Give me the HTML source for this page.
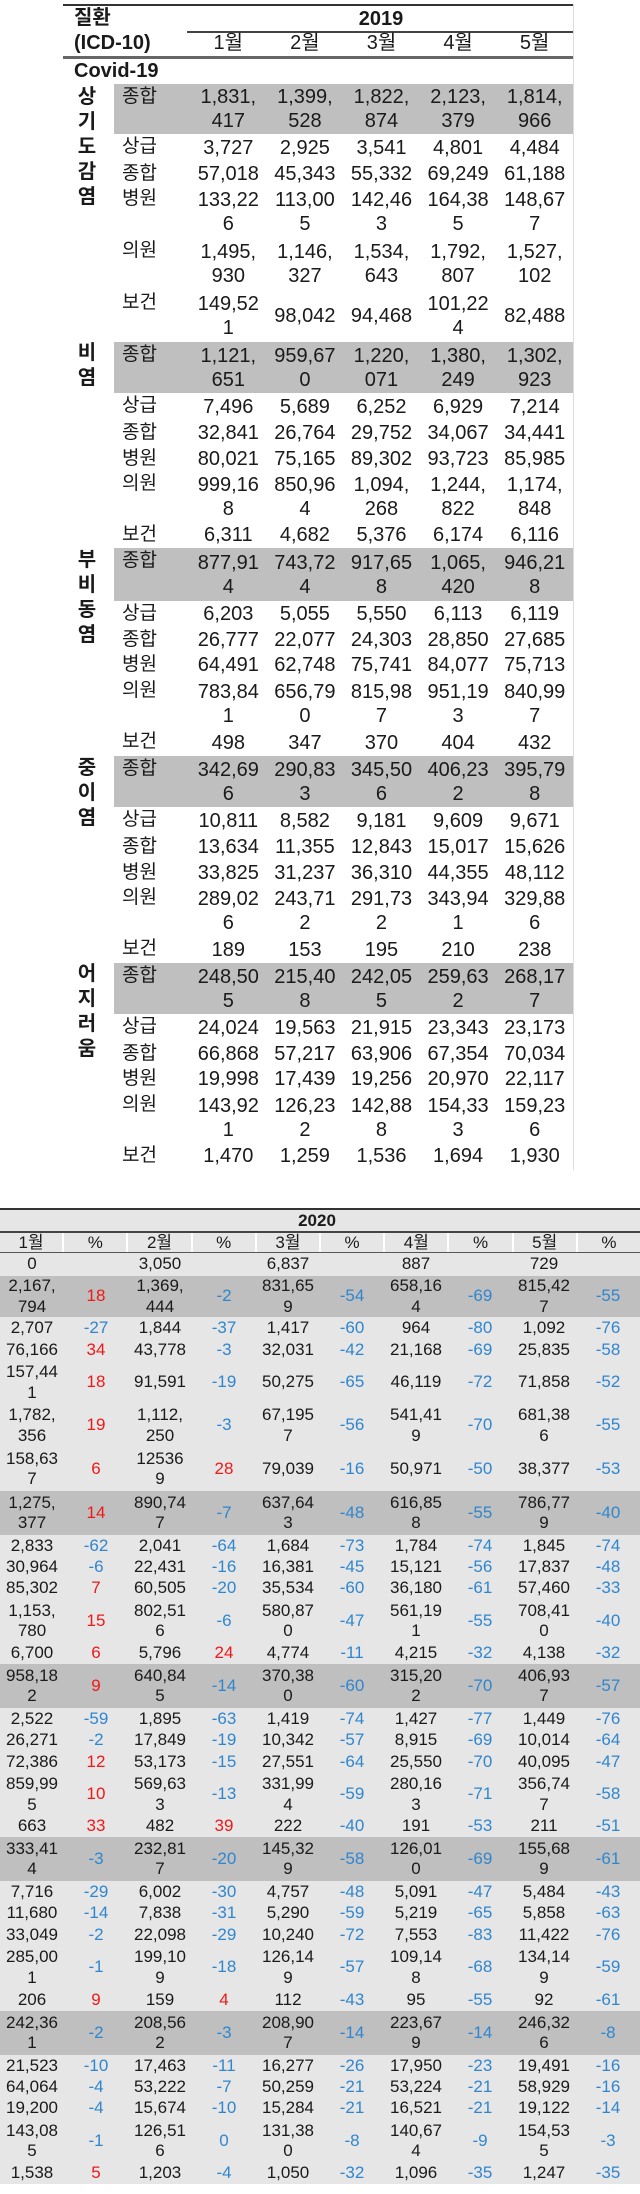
<!DOCTYPE html>
<html><head><meta charset="utf-8">
<style>
*{margin:0;padding:0;box-sizing:border-box}
html,body{width:640px;height:2194px;background:#fff;overflow:hidden}
body{position:relative;font-family:"Liberation Sans","Noto Sans CJK KR",sans-serif;color:#1a1a1a}
table{border-collapse:collapse;table-layout:fixed;position:absolute}
td{padding:0;text-align:center;white-space:nowrap;vertical-align:middle}
#t1{left:63px;top:57px;width:510px;font-size:20px;line-height:24px}
#t1 td.c{text-align:left;padding-left:8px;vertical-align:top;padding-top:1px;font-size:19px}
#t1 tr.g td.x{background:#bfbfbf}
#t2{left:0;top:1253px;width:640px;font-size:17px;line-height:20.5px;background:#e6e6e6}
#t2 tr.g td{background:#bfbfbf}
.r{color:#f01818}.b{color:#2f86cf}
.lab{position:absolute;left:74px;font-weight:bold;font-size:20px;line-height:25px;width:26px;text-align:center}
.h{position:absolute;font-size:20px;line-height:24px}
</style></head><body>
<!-- table 1 header -->
<div style="position:absolute;left:63px;top:4px;width:510px;height:2px;background:#333"></div>
<div style="position:absolute;left:187px;top:31px;width:386px;height:2px;background:#444"></div>
<div style="position:absolute;left:63px;top:56px;width:510px;height:3px;background:#666"></div>
<div style="position:absolute;left:573px;top:4px;width:1px;height:1166px;background:#ddd"></div>
<div class="h" style="left:74px;top:6px;font-weight:bold">질환</div>
<div class="h" style="left:74px;top:31px;font-weight:bold">(ICD-10)</div>
<div class="h" style="left:341px;top:7px;width:80px;text-align:center;font-weight:bold">2019</div>
<div class="h" style="left:190px;top:31px;width:383px;display:flex"><span style="flex:1;text-align:center">1월</span><span style="flex:1;text-align:center">2월</span><span style="flex:1;text-align:center">3월</span><span style="flex:1;text-align:center">4월</span><span style="flex:1;text-align:center">5월</span></div>

<div class="lab" style="top:85px">상<br>기<br>도<br>감<br>염</div>
<div class="lab" style="top:341px">비<br>염</div>
<div class="lab" style="top:548px">부<br>비<br>동<br>염</div>
<div class="lab" style="top:756px">중<br>이<br>염</div>
<div class="lab" style="top:962px">어<br>지<br>러<br>움</div>

<table id="t1">
<colgroup><col style="width:51px"><col style="width:76px"><col style="width:76.6px"><col style="width:76.6px"><col style="width:76.6px"><col style="width:76.6px"><col style="width:76.6px"></colgroup>
<tr style="height:27px"><td colspan="7" style="text-align:left;padding-left:11px;font-weight:bold">Covid-19</td></tr>
<tr class="g" style="height:50px"><td></td><td class="c x">종합</td><td class="x">1,831,<br>417</td><td class="x">1,399,<br>528</td><td class="x">1,822,<br>874</td><td class="x">2,123,<br>379</td><td class="x">1,814,<br>966</td></tr>
<tr style="height:27px"><td></td><td class="c">상급</td><td>3,727</td><td>2,925</td><td>3,541</td><td>4,801</td><td>4,484</td></tr>
<tr style="height:25px"><td></td><td class="c">종합</td><td>57,018</td><td>45,343</td><td>55,332</td><td>69,249</td><td>61,188</td></tr>
<tr style="height:52px"><td></td><td class="c">병원</td><td>133,22<br>6</td><td>113,00<br>5</td><td>142,46<br>3</td><td>164,38<br>5</td><td>148,67<br>7</td></tr>
<tr style="height:52px"><td></td><td class="c">의원</td><td>1,495,<br>930</td><td>1,146,<br>327</td><td>1,534,<br>643</td><td>1,792,<br>807</td><td>1,527,<br>102</td></tr>
<tr style="height:52px"><td></td><td class="c">보건</td><td>149,52<br>1</td><td>98,042</td><td>94,468</td><td>101,22<br>4</td><td>82,488</td></tr>

<tr class="g" style="height:51px"><td></td><td class="c x">종합</td><td class="x">1,121,<br>651</td><td class="x">959,67<br>0</td><td class="x">1,220,<br>071</td><td class="x">1,380,<br>249</td><td class="x">1,302,<br>923</td></tr>
<tr style="height:27px"><td></td><td class="c">상급</td><td>7,496</td><td>5,689</td><td>6,252</td><td>6,929</td><td>7,214</td></tr>
<tr style="height:26px"><td></td><td class="c">종합</td><td>32,841</td><td>26,764</td><td>29,752</td><td>34,067</td><td>34,441</td></tr>
<tr style="height:25px"><td></td><td class="c">병원</td><td>80,021</td><td>75,165</td><td>89,302</td><td>93,723</td><td>85,985</td></tr>
<tr style="height:51px"><td></td><td class="c">의원</td><td>999,16<br>8</td><td>850,96<br>4</td><td>1,094,<br>268</td><td>1,244,<br>822</td><td>1,174,<br>848</td></tr>
<tr style="height:26px"><td></td><td class="c">보건</td><td>6,311</td><td>4,682</td><td>5,376</td><td>6,174</td><td>6,116</td></tr>

<tr class="g" style="height:53px"><td></td><td class="c x">종합</td><td class="x">877,91<br>4</td><td class="x">743,72<br>4</td><td class="x">917,65<br>8</td><td class="x">1,065,<br>420</td><td class="x">946,21<br>8</td></tr>
<tr style="height:26px"><td></td><td class="c">상급</td><td>6,203</td><td>5,055</td><td>5,550</td><td>6,113</td><td>6,119</td></tr>
<tr style="height:25px"><td></td><td class="c">종합</td><td>26,777</td><td>22,077</td><td>24,303</td><td>28,850</td><td>27,685</td></tr>
<tr style="height:26px"><td></td><td class="c">병원</td><td>64,491</td><td>62,748</td><td>75,741</td><td>84,077</td><td>75,713</td></tr>
<tr style="height:51px"><td></td><td class="c">의원</td><td>783,84<br>1</td><td>656,79<br>0</td><td>815,98<br>7</td><td>951,19<br>3</td><td>840,99<br>7</td></tr>
<tr style="height:27px"><td></td><td class="c">보건</td><td>498</td><td>347</td><td>370</td><td>404</td><td>432</td></tr>

<tr class="g" style="height:51px"><td></td><td class="c x">종합</td><td class="x">342,69<br>6</td><td class="x">290,83<br>3</td><td class="x">345,50<br>6</td><td class="x">406,23<br>2</td><td class="x">395,79<br>8</td></tr>
<tr style="height:27px"><td></td><td class="c">상급</td><td>10,811</td><td>8,582</td><td>9,181</td><td>9,609</td><td>9,671</td></tr>
<tr style="height:26px"><td></td><td class="c">종합</td><td>13,634</td><td>11,355</td><td>12,843</td><td>15,017</td><td>15,626</td></tr>
<tr style="height:25px"><td></td><td class="c">병원</td><td>33,825</td><td>31,237</td><td>36,310</td><td>44,355</td><td>48,112</td></tr>
<tr style="height:51px"><td></td><td class="c">의원</td><td>289,02<br>6</td><td>243,71<br>2</td><td>291,73<br>2</td><td>343,94<br>1</td><td>329,88<br>6</td></tr>
<tr style="height:27px"><td></td><td class="c">보건</td><td>189</td><td>153</td><td>195</td><td>210</td><td>238</td></tr>

<tr class="g" style="height:51px"><td></td><td class="c x">종합</td><td class="x">248,50<br>5</td><td class="x">215,40<br>8</td><td class="x">242,05<br>5</td><td class="x">259,63<br>2</td><td class="x">268,17<br>7</td></tr>
<tr style="height:27px"><td></td><td class="c">상급</td><td>24,024</td><td>19,563</td><td>21,915</td><td>23,343</td><td>23,173</td></tr>
<tr style="height:25px"><td></td><td class="c">종합</td><td>66,868</td><td>57,217</td><td>63,906</td><td>67,354</td><td>70,034</td></tr>
<tr style="height:26px"><td></td><td class="c">병원</td><td>19,998</td><td>17,439</td><td>19,256</td><td>20,970</td><td>22,117</td></tr>
<tr style="height:51px"><td></td><td class="c">의원</td><td>143,92<br>1</td><td>126,23<br>2</td><td>142,88<br>8</td><td>154,33<br>3</td><td>159,23<br>6</td></tr>
<tr style="height:26px"><td></td><td class="c">보건</td><td>1,470</td><td>1,259</td><td>1,536</td><td>1,694</td><td>1,930</td></tr>
</table>

<!-- table 2 header -->
<div style="position:absolute;left:0;top:1209px;width:640px;height:44px;background:#e6e6e6"></div>
<div style="position:absolute;left:0;top:1208px;width:640px;height:2px;background:#333"></div>
<div style="position:absolute;left:0;top:1231px;width:640px;height:2px;background:#444"></div>
<div style="position:absolute;left:0;top:1252px;width:640px;height:2px;background:#555"></div>
<div style="position:absolute;left:0;top:1211px;width:640px;text-align:center;font-size:17px;line-height:20px;font-weight:bold;padding-right:6px">2020</div>
<div style="position:absolute;left:0;top:1233px;width:640px;height:19px;display:flex;font-size:17px;line-height:19px">
<span style="flex:1;text-align:center;border-right:2px solid #fff">1월</span><span style="flex:1;text-align:center;border-right:2px solid #fff">%</span><span style="flex:1;text-align:center;border-right:2px solid #fff">2월</span><span style="flex:1;text-align:center;border-right:2px solid #fff">%</span><span style="flex:1;text-align:center;border-right:2px solid #fff">3월</span><span style="flex:1;text-align:center;border-right:2px solid #fff">%</span><span style="flex:1;text-align:center;border-right:2px solid #fff">4월</span><span style="flex:1;text-align:center;border-right:2px solid #fff">%</span><span style="flex:1;text-align:center;border-right:2px solid #fff">5월</span><span style="flex:1;text-align:center">%</span></div>

<table id="t2">
<tr style="height:23px"><td>0</td><td></td><td>3,050</td><td></td><td>6,837</td><td></td><td>887</td><td></td><td>729</td><td></td></tr>

<tr class="g" style="height:41px"><td>2,167,<br>794</td><td class="r">18</td><td>1,369,<br>444</td><td class="b">-2</td><td>831,65<br>9</td><td class="b">-54</td><td>658,16<br>4</td><td class="b">-69</td><td>815,42<br>7</td><td class="b">-55</td></tr>
<tr style="height:22px"><td>2,707</td><td class="b">-27</td><td>1,844</td><td class="b">-37</td><td>1,417</td><td class="b">-60</td><td>964</td><td class="b">-80</td><td>1,092</td><td class="b">-76</td></tr>
<tr style="height:22px"><td>76,166</td><td class="r">34</td><td>43,778</td><td class="b">-3</td><td>32,031</td><td class="b">-42</td><td>21,168</td><td class="b">-69</td><td>25,835</td><td class="b">-58</td></tr>
<tr style="height:43px"><td>157,44<br>1</td><td class="r">18</td><td>91,591</td><td class="b">-19</td><td>50,275</td><td class="b">-65</td><td>46,119</td><td class="b">-72</td><td>71,858</td><td class="b">-52</td></tr>
<tr style="height:43px"><td>1,782,<br>356</td><td class="r">19</td><td>1,112,<br>250</td><td class="b">-3</td><td>67,195<br>7</td><td class="b">-56</td><td>541,41<br>9</td><td class="b">-70</td><td>681,38<br>6</td><td class="b">-55</td></tr>
<tr style="height:44px"><td>158,63<br>7</td><td class="r">6</td><td>12536<br>9</td><td class="r">28</td><td>79,039</td><td class="b">-16</td><td>50,971</td><td class="b">-50</td><td>38,377</td><td class="b">-53</td></tr>

<tr class="g" style="height:44px"><td>1,275,<br>377</td><td class="r">14</td><td>890,74<br>7</td><td class="b">-7</td><td>637,64<br>3</td><td class="b">-48</td><td>616,85<br>8</td><td class="b">-55</td><td>786,77<br>9</td><td class="b">-40</td></tr>
<tr style="height:22px"><td>2,833</td><td class="b">-62</td><td>2,041</td><td class="b">-64</td><td>1,684</td><td class="b">-73</td><td>1,784</td><td class="b">-74</td><td>1,845</td><td class="b">-74</td></tr>
<tr style="height:21px"><td>30,964</td><td class="b">-6</td><td>22,431</td><td class="b">-16</td><td>16,381</td><td class="b">-45</td><td>15,121</td><td class="b">-56</td><td>17,837</td><td class="b">-48</td></tr>
<tr style="height:21px"><td>85,302</td><td class="r">7</td><td>60,505</td><td class="b">-20</td><td>35,534</td><td class="b">-60</td><td>36,180</td><td class="b">-61</td><td>57,460</td><td class="b">-33</td></tr>
<tr style="height:44px"><td>1,153,<br>780</td><td class="r">15</td><td>802,51<br>6</td><td class="b">-6</td><td>580,87<br>0</td><td class="b">-47</td><td>561,19<br>1</td><td class="b">-55</td><td>708,41<br>0</td><td class="b">-40</td></tr>
<tr style="height:21px"><td>6,700</td><td class="r">6</td><td>5,796</td><td class="r">24</td><td>4,774</td><td class="b">-11</td><td>4,215</td><td class="b">-32</td><td>4,138</td><td class="b">-32</td></tr>

<tr class="g" style="height:44px"><td>958,18<br>2</td><td class="r">9</td><td>640,84<br>5</td><td class="b">-14</td><td>370,38<br>0</td><td class="b">-60</td><td>315,20<br>2</td><td class="b">-70</td><td>406,93<br>7</td><td class="b">-57</td></tr>
<tr style="height:22px"><td>2,522</td><td class="b">-59</td><td>1,895</td><td class="b">-63</td><td>1,419</td><td class="b">-74</td><td>1,427</td><td class="b">-77</td><td>1,449</td><td class="b">-76</td></tr>
<tr style="height:21px"><td>26,271</td><td class="b">-2</td><td>17,849</td><td class="b">-19</td><td>10,342</td><td class="b">-57</td><td>8,915</td><td class="b">-69</td><td>10,014</td><td class="b">-64</td></tr>
<tr style="height:22px"><td>72,386</td><td class="r">12</td><td>53,173</td><td class="b">-15</td><td>27,551</td><td class="b">-64</td><td>25,550</td><td class="b">-70</td><td>40,095</td><td class="b">-47</td></tr>
<tr style="height:43px"><td>859,99<br>5</td><td class="r">10</td><td>569,63<br>3</td><td class="b">-13</td><td>331,99<br>4</td><td class="b">-59</td><td>280,16<br>3</td><td class="b">-71</td><td>356,74<br>7</td><td class="b">-58</td></tr>
<tr style="height:21px"><td>663</td><td class="r">33</td><td>482</td><td class="r">39</td><td>222</td><td class="b">-40</td><td>191</td><td class="b">-53</td><td>211</td><td class="b">-51</td></tr>

<tr class="g" style="height:44px"><td>333,41<br>4</td><td class="b">-3</td><td>232,81<br>7</td><td class="b">-20</td><td>145,32<br>9</td><td class="b">-58</td><td>126,01<br>0</td><td class="b">-69</td><td>155,68<br>9</td><td class="b">-61</td></tr>
<tr style="height:22px"><td>7,716</td><td class="b">-29</td><td>6,002</td><td class="b">-30</td><td>4,757</td><td class="b">-48</td><td>5,091</td><td class="b">-47</td><td>5,484</td><td class="b">-43</td></tr>
<tr style="height:21px"><td>11,680</td><td class="b">-14</td><td>7,838</td><td class="b">-31</td><td>5,290</td><td class="b">-59</td><td>5,219</td><td class="b">-65</td><td>5,858</td><td class="b">-63</td></tr>
<tr style="height:22px"><td>33,049</td><td class="b">-2</td><td>22,098</td><td class="b">-29</td><td>10,240</td><td class="b">-72</td><td>7,553</td><td class="b">-83</td><td>11,422</td><td class="b">-76</td></tr>
<tr style="height:43px"><td>285,00<br>1</td><td class="b">-1</td><td>199,10<br>9</td><td class="b">-18</td><td>126,14<br>9</td><td class="b">-57</td><td>109,14<br>8</td><td class="b">-68</td><td>134,14<br>9</td><td class="b">-59</td></tr>
<tr style="height:22px"><td>206</td><td class="r">9</td><td>159</td><td class="r">4</td><td>112</td><td class="b">-43</td><td>95</td><td class="b">-55</td><td>92</td><td class="b">-61</td></tr>

<tr class="g" style="height:44px"><td>242,36<br>1</td><td class="b">-2</td><td>208,56<br>2</td><td class="b">-3</td><td>208,90<br>7</td><td class="b">-14</td><td>223,67<br>9</td><td class="b">-14</td><td>246,32<br>6</td><td class="b">-8</td></tr>
<tr style="height:22px"><td>21,523</td><td class="b">-10</td><td>17,463</td><td class="b">-11</td><td>16,277</td><td class="b">-26</td><td>17,950</td><td class="b">-23</td><td>19,491</td><td class="b">-16</td></tr>
<tr style="height:21px"><td>64,064</td><td class="b">-4</td><td>53,222</td><td class="b">-7</td><td>50,259</td><td class="b">-21</td><td>53,224</td><td class="b">-21</td><td>58,929</td><td class="b">-16</td></tr>
<tr style="height:21px"><td>19,200</td><td class="b">-4</td><td>15,674</td><td class="b">-10</td><td>15,284</td><td class="b">-21</td><td>16,521</td><td class="b">-21</td><td>19,122</td><td class="b">-14</td></tr>
<tr style="height:44px"><td>143,08<br>5</td><td class="b">-1</td><td>126,51<br>6</td><td class="b">0</td><td>131,38<br>0</td><td class="b">-8</td><td>140,67<br>4</td><td class="b">-9</td><td>154,53<br>5</td><td class="b">-3</td></tr>
<tr style="height:21px"><td>1,538</td><td class="r">5</td><td>1,203</td><td class="b">-4</td><td>1,050</td><td class="b">-32</td><td>1,096</td><td class="b">-35</td><td>1,247</td><td class="b">-35</td></tr>
</table>
</body></html>
